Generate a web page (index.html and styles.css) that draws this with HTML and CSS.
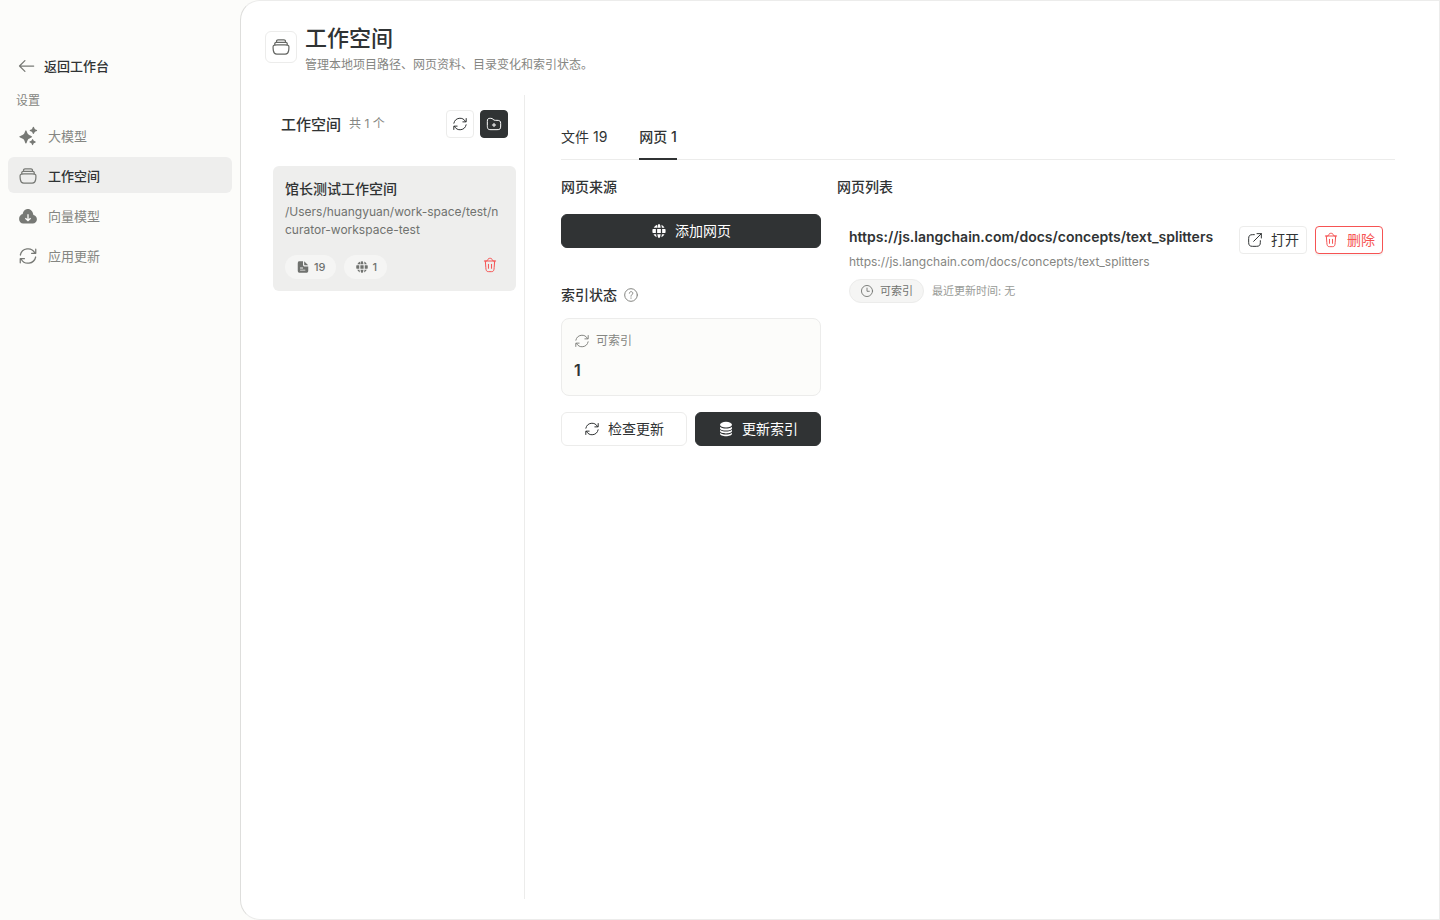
FILE: index.html
```html
<!DOCTYPE html>
<html lang="zh-CN">
<head>
<meta charset="utf-8">
<meta name="viewport" content="width=device-width, initial-scale=1">
<title>工作空间</title>
<link rel="stylesheet" href="styles.css">
</head>
<body>
<svg class="sprite" aria-hidden="true">
  <symbol id="arrow-left" viewBox="0 0 24 24"><path class="line" d="M20 12H3M9.500 5.500L3 12l6.500 6.500"/></symbol>
  <symbol id="stars" viewBox="0 0 24 24"><path class="fill" d="M9.500 5c1 0 1.300 3 2.200 4.300C13 11.200 17 12 17 13s-4 1.800-5.300 3.700C10.800 18 10.500 21 9.500 21s-1.300-3-2.200-4.300C6 14.800 1.500 14 1.500 13S6 11.200 7.300 9.300C8.200 8 8.500 5 9.500 5zM18.500 1c.8 0 1 1.800 1.700 2.500S23 4.500 23 5.300s-2.100 1.100-2.800 1.800-.9 2.400-1.700 2.400-1-1.700-1.700-2.400S14 6.100 14 5.300s2.100-1.100 2.800-1.800S17.700 1 18.500 1zM17.500 15.500c.7 0 .9 1.500 1.500 2.200s2.500.8 2.500 1.500-1.800.9-2.500 1.500-.8 2.300-1.500 2.300-.9-1.600-1.500-2.300-2.500-.8-2.500-1.500 1.800-.8 2.500-1.500.8-2.200 1.500-2.200z"/></symbol>
  <symbol id="stack" viewBox="0 0 24 24"><path class="line" d="M2.600 14.500c-.3-2.500-.4-3.400.3-4.200s1.800-.9 4.300-.9h9.600c2.500 0 3.600 0 4.300.9s.6 1.700.3 4.200l-.3 2.200c-.4 2.900-1.100 3.800-4 3.800H6.900c-2.900 0-3.600-.9-4-3.800zM19.500 9c.2-1.800-.5-2.700-2-2.700h-11C5 6.300 4.300 7.200 4.500 9M17.400 6c.1-1.700-.5-2.600-1.900-2.600h-7C7.100 3.400 6.500 4.300 6.600 6"/></symbol>
  <symbol id="cloud" viewBox="0 0 24 24"><path class="fill" fill-rule="evenodd" d="M6.300 21h11.400c2.700 0 5-2.300 5-5.100 0-2.600-1.800-4.700-4.200-5.100C17.800 6.500 15.400 3.500 12 3.500c-3.500 0-6.100 2.700-6.300 6.200C3.200 10.200 1.300 12.500 1.300 15.500c0 3 2.200 5.500 5 5.500zM12 18.500l-3.700-3.200 1-1.200 1.900 1.500V10h1.600v5.600l1.900-1.500 1 1.200z"/></symbol>
  <symbol id="refresh" viewBox="0 0 24 24"><path class="line" d="M2.800 10.800A9.400 9.400 0 0 1 20.300 8.400M21.300 3.800v5h-5M21.200 13.200A9.400 9.400 0 0 1 3.700 15.600M2.700 20.200v-5h5"/></symbol>
  <symbol id="folder-plus" viewBox="0 0 24 24"><path class="line" d="M2 7.500C2 4.500 3 3.500 5.700 3.500h1.400c1.800 0 2.500.5 3.500 1.500s1.800 1.500 3.400 1.500h2.500C20.500 6.500 22 7.500 22 11v4c0 4.500-1 5.500-5.500 5.500h-9C3 20.500 2 19.500 2 15zM12 11v5M9.500 13.500h5"/></symbol>
  <symbol id="file" viewBox="0 0 24 24"><path class="fill" fill-rule="evenodd" d="M6 2h6v5.500C12 10 13 11 15.500 11H21v7c0 3-1 4-4 4H7c-3 0-4-1-4-4V6c0-3 1-4 3-4zM7 13v1.600h5V13zM7 16.500v1.600h9v-1.600zM14 2.300 20.500 8.500V9H15.500C14.500 9 14 8.500 14 7.500z"/></symbol>
  <symbol id="globe" viewBox="0 0 24 24"><path class="fill" d="M9 2.500V7.200H4A10 10 0 0 1 9 2.500zM10.800 2h2.400q1 2.200 1.300 5.200h-5Q9.800 4.200 10.800 2zM15.600 2.700A10 10 0 0 1 20.300 7.200h-4Q16.200 4.800 15.600 2.700zM2.500 9h4.800v6H2.500a10 10 0 0 1 0-6zM9.200 9h5.600v6H9.200zM16.700 9h4.800a10 10 0 0 1 0 6h-4.800zM3.700 16.800h4q.1 2.400.8 4.500a10 10 0 0 1-4.800-4.500zM9.500 16.800h5q-.3 3-1.300 5.200h-2.400q-1-2.200-1.300-5.200zM16.300 16.800h4a10 10 0 0 1-4.800 4.500q.7-2.100.8-4.500z"/></symbol>
  <symbol id="trash" viewBox="0 0 24 24"><path class="line" d="M20.500 6h-17M18.800 8.500l-.5 7c-.3 4.500-.6 6.500-4.300 6.500h-4c-3.700 0-4-2-4.300-6.500L5 6M19 6l-.2 2.500M6.500 6C8 6 8.500 5 9 3.600 9.400 2.500 10 2 11 2h2c1 0 1.600.5 2 1.600C15.500 5 16 6 17.500 6M9.700 11v6M14.300 11v6"/></symbol>
  <symbol id="help" viewBox="0 0 24 24"><circle class="line" cx="12" cy="12" r="9.500"/><path class="line" d="M9.500 9.300c0-3.200 5.200-3.200 5.200 0 0 2.200-2.700 2.200-2.700 4.500M12 16.300v.7"/></symbol>
  <symbol id="database" viewBox="0 0 24 24"><ellipse class="fill" cx="12" cy="5.500" rx="9" ry="4.200"/><path class="fill" d="M3 8.500c2 3.600 16 3.600 18 0v2.300c0 4.800-18 4.800-18 0zM3 13.200c2 3.600 16 3.600 18 0v1.800c0 4.800-18 4.800-18 0zM3 17.500c2 3.600 16 3.600 18 0v1.300c0 5.400-18 5.400-18 0z"/></symbol>
  <symbol id="external" viewBox="0 0 24 24"><path class="line" d="M11 4H8.500C4 4 2.500 5.500 2.500 10v5.500c0 4.500 1.500 6 6 6H14c4.500 0 6-1.500 6-6V13M10 14 21.500 2.500M15 2.500h6.500V9"/></symbol>
  <symbol id="clock" viewBox="0 0 24 24"><circle class="line" cx="12" cy="12" r="9.500"/><path class="line" d="M12 7v5.500h4"/></symbol>
</svg>
<div class="app">
  <aside class="sidebar">
    <a class="back" href="#"><svg class="icon-md"><use href="#arrow-left"/></svg>返回工作台</a>
    <p class="nav-label">设置</p>
    <nav class="nav" aria-label="设置">
      <a class="nav-item" href="#"><svg class="icon-md"><use href="#stars"/></svg>大模型</a>
      <a class="nav-item current" href="#" aria-current="page"><svg class="icon-md"><use href="#stack"/></svg>工作空间</a>
      <a class="nav-item" href="#"><svg class="icon-md"><use href="#cloud"/></svg>向量模型</a>
      <a class="nav-item" href="#"><svg class="icon-md"><use href="#refresh"/></svg>应用更新</a>
    </nav>
  </aside>
  <main class="main">
    <header class="page-header">
      <span class="page-icon"><svg class="icon-md"><use href="#stack"/></svg></span>
      <div>
        <h1>工作空间</h1>
        <p class="subtitle">管理本地项目路径、网页资料、目录变化和索引状态。</p>
      </div>
    </header>
    <div class="content">
      <section class="spaces">
        <div class="spaces-head">
          <h2>工作空间</h2>
          <span class="count">共 1 个</span>
          <button class="btn square" type="button" aria-label="刷新"><svg class="icon-sm"><use href="#refresh"/></svg></button>
          <button class="btn square dark" type="button" aria-label="添加工作空间"><svg class="icon-sm"><use href="#folder-plus"/></svg></button>
        </div>
        <article class="space-card">
          <h3>馆长测试工作空间</h3>
          <p class="path">/Users/huangyuan/work-space/test/ncurator-workspace-test</p>
          <div class="space-foot">
            <span class="chip"><svg class="icon-xs"><use href="#file"/></svg>19</span>
            <span class="chip"><svg class="icon-xs"><use href="#globe"/></svg>1</span>
            <button class="trash" type="button" aria-label="删除工作空间"><svg class="icon-sm"><use href="#trash"/></svg></button>
          </div>
        </article>
      </section>
      <section class="detail">
        <div class="tabs" role="tablist">
          <button class="tab" type="button" role="tab" aria-selected="false">文件 19</button>
          <button class="tab active" type="button" role="tab" aria-selected="true">网页 1</button>
        </div>
        <div class="columns">
          <div class="source">
            <h3>网页来源</h3>
            <button class="btn dark wide" type="button"><svg class="icon-sm"><use href="#globe"/></svg>添加网页</button>
            <h3 class="status-title">索引状态 <svg class="icon-sm"><use href="#help"/></svg></h3>
            <div class="stat">
              <p class="stat-label"><svg class="icon-sm"><use href="#refresh"/></svg>可索引</p>
              <p class="stat-value">1</p>
            </div>
            <div class="actions">
              <button class="btn" type="button"><svg class="icon-sm"><use href="#refresh"/></svg>检查更新</button>
              <button class="btn dark" type="button"><svg class="icon-sm"><use href="#database"/></svg>更新索引</button>
            </div>
          </div>
          <div class="pages">
            <h3>网页列表</h3>
            <article class="page-row">
              <div class="page-info">
                <h4>https://js.langchain.com/docs/concepts/text_splitters</h4>
                <p class="url">https://js.langchain.com/docs/concepts/text_splitters</p>
                <p class="meta"><span class="tag"><svg class="icon-xs"><use href="#clock"/></svg>可索引</span>最近更新时间: 无</p>
              </div>
              <div class="row-actions">
                <button class="btn small" type="button"><svg class="icon-sm"><use href="#external"/></svg>打开</button>
                <button class="btn small danger" type="button"><svg class="icon-sm"><use href="#trash"/></svg>删除</button>
              </div>
            </article>
          </div>
        </div>
      </section>
    </div>
  </main>
</div>
</body>
</html>
```
FILE: styles.css
```css
:root {
  --ink: #303334;
  --muted: #858682;
  --line: #ececeb;
  --soft: #eeeeed;
  --paper: #fcfcfa;
  --red: #f65353;
}
* { box-sizing: border-box; }
body {
  margin: 0;
  background: var(--paper);
  color: var(--ink);
  font: 14px/20px Inter, "Noto Sans CJK SC", sans-serif;
}
h1, h2, h3, h4, p { margin: 0; }
h1, h2, h3 { font-weight: 500; }
h4 { font-weight: 600; }
h3, h4 { font-size: 14px; }
a { color: inherit; text-decoration: none; }
button { font: inherit; color: inherit; cursor: pointer; }

.sprite { position: absolute; width: 0; height: 0; }
.line { fill: none; stroke: currentColor; stroke-width: 1.5; stroke-linecap: round; stroke-linejoin: round; }
.fill { fill: currentColor; }
.icon-md { width: 20px; height: 20px; flex: none; }
.icon-sm { width: 16px; height: 16px; flex: none; }
.icon-xs { width: 14px; height: 14px; flex: none; }

.app { display: flex; min-height: 100vh; }

.sidebar { width: 240px; flex: none; padding: 56px 8px 0; font-size: 13px; }
.back { display: flex; align-items: center; gap: 7px; padding: 0 9px; font-weight: 500; }
.back svg, .nav-item svg { color: #777975; }
.nav-label { padding: 0 8px; margin: 15px 0 6px; font-size: 12px; color: var(--muted); }
.nav { display: flex; flex-direction: column; gap: 4px; }
.nav-item { display: flex; align-items: center; gap: 10px; height: 36px; padding: 2px 10px 0; border-radius: 6px; color: var(--muted); }
.nav-item.current { background: var(--soft); color: var(--ink); font-weight: 500; }

.main {
  flex: 1;
  min-width: 0;
  display: flex;
  flex-direction: column;
  padding: 22px 24px 20px;
  background: #fff;
  border: 1px solid var(--line);
  border-left-color: #dededc;
  border-radius: 20px 0 0 20px;
}
.page-header { display: flex; align-items: flex-start; gap: 8px; margin-bottom: 18px; }
.page-icon { display: grid; place-items: center; width: 32px; height: 32px; margin-top: 8px; border: 1px solid var(--line); border-radius: 6px; color: #666865; }
h1 { font-size: 22px; line-height: 30px; }
.subtitle { font-size: 12px; line-height: 24px; color: var(--muted); }

.content { flex: 1; display: flex; }
.spaces { width: 260px; flex: none; padding: 15px 8px; border-right: 1px solid var(--line); }
.spaces-head { display: flex; align-items: center; gap: 6px; padding: 0 8px; margin-bottom: 28px; }
h2 { font-size: 15px; line-height: 22px; padding-top: 2px; }
.count { flex: 1; padding-left: 2px; font-size: 12px; color: var(--muted); }
.space-card { padding: 12px; background: var(--soft); border-radius: 6px; }
.space-card h3 { line-height: 22px; }
.path { font-size: 12px; line-height: 18px; margin-top: 3px; color: #70726f; word-break: break-all; }
.space-foot { display: flex; align-items: center; gap: 8px; margin-top: 16px; }
.chip { display: flex; align-items: center; gap: 4px; height: 24px; padding: 0 10px 0 11px; border-radius: 12px; background: #f5f5f4; font-size: 11px; font-weight: 500; color: #70726f; }
.trash { display: grid; place-items: start center; margin-left: auto; width: 28px; height: 24px; padding: 2px 0 0; border: 0; background: none; color: var(--red); }

.btn {
  display: flex; align-items: center; justify-content: center; gap: 8px;
  height: 34px; padding: 0 8px;
  background: #fff; border: 1px solid var(--line); border-radius: 6px;
}
.btn.dark { background: var(--ink); border-color: var(--ink); color: #fff; }
.btn.square { width: 28px; height: 28px; padding: 0; border-radius: 4px; }
.btn.small { height: 28px; padding: 0 7px; border-radius: 4px; }
.btn.danger { color: var(--red); border-color: var(--red); box-shadow: 0 2px 1px #f5f5f4; }
.wide { width: 100%; }

.detail { flex: 1; min-width: 0; padding: 20px 20px 0 36px; }
.tabs { display: flex; gap: 32px; border-bottom: 1px solid var(--line); }
.tab { height: 45px; margin-bottom: -1px; padding: 0; border: 0; border-bottom: 2px solid transparent; background: none; }
.tab.active { border-color: var(--ink); font-weight: 500; }
.columns { display: grid; grid-template-columns: 260px minmax(0, 1fr); gap: 16px; padding-top: 17px; }
.source h3 { margin-bottom: 17px; }
.source .status-title { display: flex; align-items: center; gap: 6px; margin: 37px 0 13px; }
.status-title svg { color: var(--muted); }
.stat { padding: 12px 12px 13px; background: var(--paper); border: 1px solid var(--line); border-radius: 8px; }
.stat-label { display: flex; align-items: center; gap: 6px; font-size: 12px; color: var(--muted); }
.stat-value { margin-top: 7px; font-size: 16px; line-height: 24px; font-weight: 600; }
.actions { display: grid; grid-template-columns: 1fr 1fr; gap: 8px; margin-top: 16px; }

.page-row { display: flex; align-items: flex-start; gap: 12px; padding: 29px 12px 12px; }
.page-info { flex: 1; min-width: 0; }
.page-info h4 { line-height: 22px; overflow-wrap: anywhere; }
.url { font-size: 12px; line-height: 20px; margin-top: 4px; color: var(--muted); overflow-wrap: anywhere; }
.meta { display: flex; align-items: center; gap: 8px; margin-top: 7px; font-size: 11px; color: #999b97; }
.tag { display: flex; align-items: center; gap: 6px; height: 24px; padding: 0 10px; border: 1px solid var(--line); border-radius: 12px; background: #f5f5f4; color: #70726f; }
.row-actions { display: flex; gap: 8px; }
```
